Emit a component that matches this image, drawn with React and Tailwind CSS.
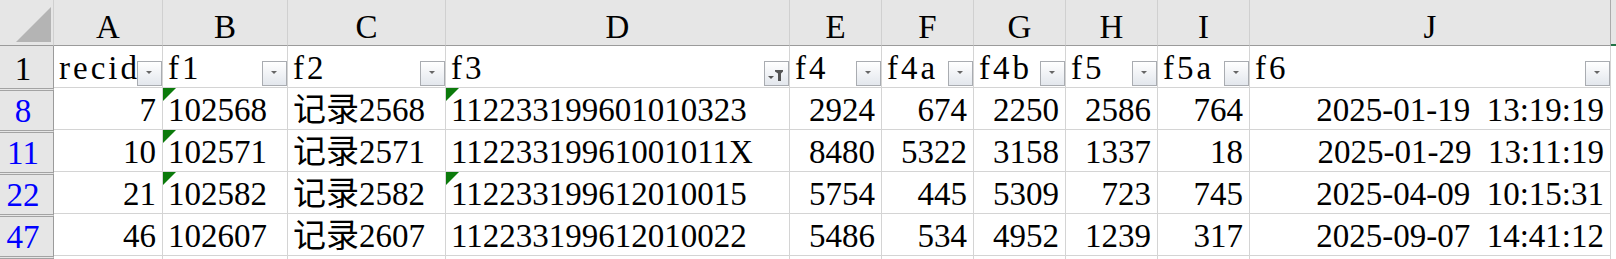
import React from "react";

const font = "font-[Liberation_Serif,Noto_Sans_CJK_SC,serif] text-[33px] leading-[33px]";

const letters = ["A", "B", "C", "D", "E", "F", "G", "H", "I", "J"];
const fields = ["recid", "f1", "f2", "f3", "f4", "f4a", "f4b", "f5", "f5a", "f6"];
// which columns hold text (left aligned) vs numbers (right aligned)
const leftCols = [1, 2, 3];

const rows = [
  {
    n: 8,
    marks: [1, 3],
    cells: ["7", "102568", "记录2568", "112233199601010323", "2924", "674", "2250", "2586", "764", "2025-01-19  13:19:19"],
  },
  {
    n: 11,
    marks: [1],
    cells: ["10", "102571", "记录2571", "11223319961001011X", "8480", "5322", "3158", "1337", "18", "2025-01-29  13:11:19"],
  },
  {
    n: 22,
    marks: [1, 3],
    cells: ["21", "102582", "记录2582", "112233199612010015", "5754", "445", "5309", "723", "745", "2025-04-09  10:15:31"],
  },
  {
    n: 47,
    marks: [],
    cells: ["46", "102607", "记录2607", "112233199612010022", "5486", "534", "4952", "1239", "317", "2025-09-07  14:41:12"],
  },
];

const FilterButton = ({ active }) => (
  <div className="absolute right-0 bottom-[1px] w-[25px] h-[25px] border border-[#a9acb1] bg-linear-to-b from-white to-[#e3e7ed]">
    <svg width="23" height="23" viewBox="0 0 23 23">
      {active ? (
        <>
          <polygon points="10,8 18,8 18,9.5 16,11.5 16,19 13,19 13,11.5 10,9.5" fill="#555" />
          <polygon points="3,14 9,14 6,17" fill="#555" />
        </>
      ) : (
        <polygon points="8,9 14,9 11,12" fill="#666" />
      )}
    </svg>
  </div>
);

const GreenMark = () => (
  <svg className="absolute top-0 left-0" width="13" height="13" viewBox="0 0 13 13">
    <polygon points="0,0 13,0 0,13" fill="#0b7a0b" />
  </svg>
);

export default function App() {
  return (
    <div className={`h-[259px] w-[1616px] overflow-hidden bg-white text-black ${font}`}>
      <div className="grid grid-cols-[54px_109px_125px_158px_344px_92px_92px_92px_92px_92px_361px_5px] grid-rows-[46px_42px_42px_42px_42px_42px_3px]">
        {/* column letters */}
        <div className="flex items-end justify-end pr-[2px] pb-[3px] bg-[#e6e6e6] border-r border-b border-[#d0d0d0] border-b-[#9b9b9b]">
          <svg width="35" height="35" viewBox="0 0 35 35">
            <polygon points="35,0 35,35 0,35" fill="#b4b4b4" />
          </svg>
        </div>
        {letters.map((l, i) => (
          <div
            key={l}
            className={`flex items-end justify-center pb-[1px] bg-[#e6e6e6] border-r border-b border-[#d0d0d0] border-b-[#9b9b9b] ${
              i === 9 ? "border-r-[#ababab]" : ""
            }`}
          >
            {l}
          </div>
        ))}
        <div className="bg-[#e6e6e6] border-b-2 border-b-[#217346]" />

        {/* row 1: field names with filter buttons */}
        <div className="flex items-end justify-center pr-[7px] pb-[2px] bg-[#e6e6e6] border-r border-[#9b9b9b]">1</div>
        {fields.map((f, i) => (
          <div key={f} className="relative flex items-end pl-[5px] pb-[2px] overflow-hidden border-r border-b border-[#d4d4d4]">
            <span className="tracking-[3px] whitespace-nowrap">{f}</span>
            <FilterButton active={i === 3} />
          </div>
        ))}
        <div />

        {/* filtered data rows */}
        {rows.map((r) => (
          <React.Fragment key={r.n}>
            <div className="flex items-end justify-center pr-[7px] pb-[2px] bg-[#e6e6e6] border-t-[3px] border-double border-t-[#a3a3a3] border-r border-r-[#9b9b9b] text-[#0000ff]">
              {r.n}
            </div>
            {r.cells.map((c, i) => (
              <div
                key={i}
                className={`relative flex items-end pb-[2px] overflow-hidden whitespace-pre border-r border-b border-[#d4d4d4] ${
                  leftCols.includes(i) ? "justify-start pl-[5px]" : "justify-end pr-[6px]"
                }`}
              >
                {r.marks.includes(i) && <GreenMark />}
                {c}
              </div>
            ))}
            <div />
          </React.Fragment>
        ))}

        {/* next row, cut off at the bottom */}
        <div className="bg-[#e6e6e6] border-t-[3px] border-double border-t-[#a3a3a3] border-r border-r-[#9b9b9b]" />
        {letters.map((l) => (
          <div key={l} className="border-r border-[#d4d4d4]" />
        ))}
        <div />
      </div>
    </div>
  );
}
